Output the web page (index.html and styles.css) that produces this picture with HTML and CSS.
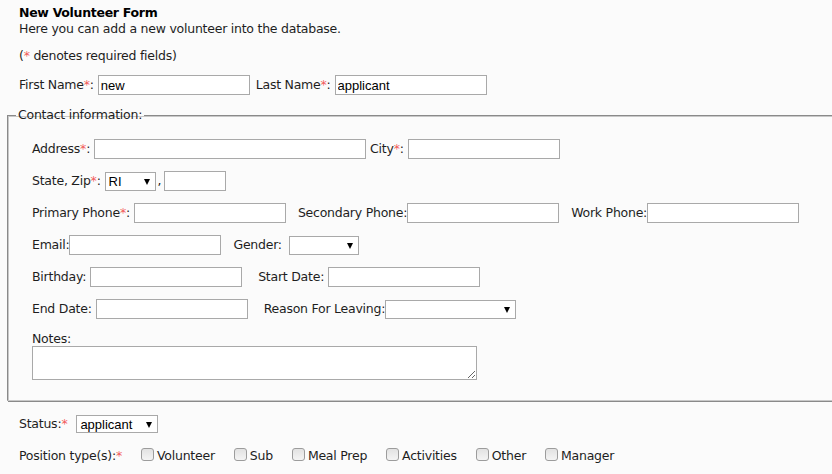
FILE: index.html
```html
<!DOCTYPE html>
<html>
<head>
<meta charset="utf-8">
<link rel="stylesheet" href="styles.css">
</head>
<body>
<div class="page">
  <div class="title">New Volunteer Form</div>
  <div class="intro">Here you can add a new volunteer into the database.</div>
  <p class="note">(<span class="req">*</span> denotes required fields)</p>

  <div class="row top">
    <label class="lbl">First Name<span class="req">*</span>:</label>
    <input class="txt" type="text" value="new">
    <label class="lbl g6">Last Name<span class="req">*</span>:</label>
    <input class="txt" type="text" value="applicant">
  </div>

  <fieldset class="contact">
    <legend>Contact information:</legend>
    <div class="inner">
      <div class="row">
        <label class="lbl">Address<span class="req">*</span>:</label>
        <input class="txt wide" type="text">
        <label class="lbl g4">City<span class="req">*</span>:</label>
        <input class="txt" type="text">
      </div>
      <div class="row">
        <label class="lbl">State, Zip<span class="req">*</span>:</label>
        <span class="sel w51"><select><option>RI</option></select></span>
        <span class="comma">,</span>
        <input class="txt zip" type="text">
      </div>
      <div class="row">
        <label class="lbl">Primary Phone<span class="req">*</span>:</label>
        <input class="txt" type="text">
        <label class="lbl g12 tight">Secondary Phone:</label>
        <input class="txt" type="text">
        <label class="lbl g12 tight">Work Phone:</label>
        <input class="txt" type="text">
      </div>
      <div class="row">
        <label class="lbl tight">Email:</label>
        <input class="txt" type="text">
        <label class="lbl g12 wide-gap">Gender:</label>
        <span class="sel w70"><select><option></option></select></span>
      </div>
      <div class="row">
        <label class="lbl">Birthday:</label>
        <input class="txt" type="text">
        <label class="lbl g16">Start Date:</label>
        <input class="txt" type="text">
      </div>
      <div class="row">
        <label class="lbl">End Date:</label>
        <input class="txt" type="text">
        <label class="lbl g16 tight">Reason For Leaving:</label>
        <span class="sel w131"><select><option></option></select></span>
      </div>
      <div class="notes">
        <label class="nlbl">Notes:</label>
        <textarea class="area"></textarea>
      </div>
    </div>
  </fieldset>

  <div class="row status">
    <label class="lbl s7">Status:<span class="req">*</span></label>
    <span class="sel w82"><select><option>applicant</option></select></span>
  </div>

  <div class="row pos">
    <label class="lbl p21">Position type(s):<span class="req">*</span></label>
    <label class="chk"><input type="checkbox">Volunteer</label>
    <label class="chk"><input type="checkbox">Sub</label>
    <label class="chk"><input type="checkbox">Meal Prep</label>
    <label class="chk"><input type="checkbox">Activities</label>
    <label class="chk"><input type="checkbox">Other</label>
    <label class="chk"><input type="checkbox">Manager</label>
  </div>
</div>
</body>
</html>
```

FILE: styles.css
```css
html, body {
  margin: 0;
  padding: 0;
  background: #fbfbfb;
  overflow: hidden;
}

.page {
  font-family: "DejaVu Sans", Verdana, sans-serif;
  font-size: 12.5px;
  letter-spacing: -0.24px;
  line-height: 16px;
  color: #1e1e1e;
  padding: 5px 0 0 19px;
  width: 813px;
  overflow: hidden;
}

.title {
  font-weight: bold;
  color: #000;
  letter-spacing: -0.3px;
}

.note {
  margin: 11px 0 0;
}

.req {
  color: #f25b5b;
}

.row {
  display: flex;
  align-items: center;
  height: 20px;
  white-space: nowrap;
}

.row.top {
  margin-top: 11px;
}

.lbl {
  margin-right: 4px;
}
.lbl.tight { margin-right: 0; }
.lbl.wide-gap { margin-right: 7px; }
.g4 { margin-left: 4px; }
.g6 { margin-left: 6px; }
.g12 { margin-left: 12px; }
.g16 { margin-left: 16px; }

.txt {
  box-sizing: border-box;
  width: 152px;
  height: 20px;
  margin: 0;
  padding: 0 2px;
  border: 1px solid #a9a9a9;
  background: #fff;
  font-family: "Liberation Sans", Arial, sans-serif;
  font-size: 13px;
  letter-spacing: 0;
  color: #000;
  outline: none;
}
.txt.wide { width: 272px; }
.txt.zip { width: 62px; }

.comma {
  margin: 0 3px 0 2px;
}

.sel {
  position: relative;
  display: inline-block;
  height: 19px;
}
.sel select {
  -webkit-appearance: none;
  appearance: none;
  box-sizing: border-box;
  width: 100%;
  height: 19px;
  margin: 0;
  padding: 0 0 0 3px;
  border: 1px solid #a9a9a9;
  border-radius: 0;
  background: #fff;
  font-family: "Liberation Sans", Arial, sans-serif;
  font-size: 13px;
  letter-spacing: 0;
  line-height: 17px;
  color: #000;
}
.sel::after {
  content: "";
  position: absolute;
  right: 6px;
  top: 7px;
  width: 0;
  height: 0;
  border-left: 3.5px solid transparent;
  border-right: 3.5px solid transparent;
  border-top: 6px solid #000;
  pointer-events: none;
}
.w51 { width: 51px; }
.w70 { width: 70px; }
.w82 { width: 82px; height: 18px; }
.w82 select { height: 18px; }
.w131 { width: 131px; }

.contact {
  margin: 12px -40px 0 -12px;
  padding: 0 0 20px 10px;
  border-color: #8a8a8a #c8c8c8 #c8c8c8 #8a8a8a;
  border-style: solid;
  border-width: 1px;
  box-shadow: inset 1px 1px 0 #c8c8c8, 1px 1px 0 #8a8a8a;
  min-width: 0;
}
.contact legend {
  padding: 0 2px;
  margin: 0 0 0 -2px;
}

.inner {
  padding: 16px 0 0 14px;
  display: flex;
  flex-direction: column;
  gap: 12px;
}

.notes {
  display: flex;
  flex-direction: column;
}
.nlbl {
  line-height: 15px;
}
.area {
  box-sizing: border-box;
  width: 445px;
  height: 34px;
  margin: 0;
  border: 1px solid #a9a9a9;
  background: #fff;
  display: block;
  resize: both;
}

.status {
  margin-top: 13px;
}
.s7 { margin-right: 9px; }

.pos {
  margin-top: 12px;
}
.p21 { margin-right: 19px; }

.chk {
  display: inline-flex;
  align-items: center;
  margin-right: 19px;
}
.chk input {
  -webkit-appearance: none;
  appearance: none;
  box-sizing: border-box;
  width: 13px;
  height: 13px;
  margin: 0 3px -1px 0;
  border: 1px solid #9c9c9c;
  border-radius: 3px;
  background: linear-gradient(#e2e2e2, #f4f4f4);
  position: relative;
  top: -2px;
}
```
